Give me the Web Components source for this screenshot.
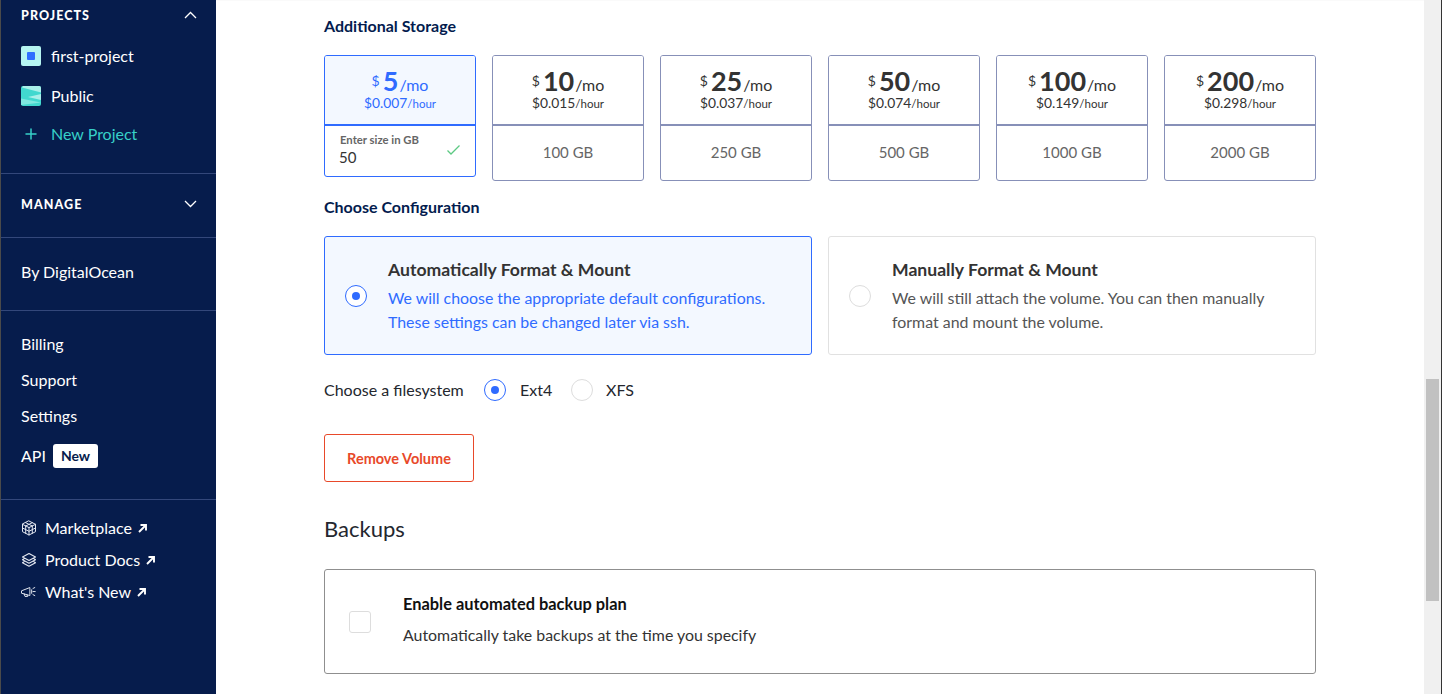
<!DOCTYPE html>
<html lang="en"><head><meta charset="utf-8"><title>Volume</title>
<style>
html,body{margin:0;height:100%;overflow:hidden;background:#fff}
body{font-family:Lato,"Noto Sans",sans-serif;font-size:16px;color:#031b4e}
ds-app{height:694px}
</style></head><body>
<ds-app>
 <ds-sidebar slot="side">
  <ds-section style="--pt:0px;--pb:21px">
   <ds-head open h="30">PROJECTS</ds-head>
   <ds-row h="40" style="margin-top:6px" icon="first">first-project</ds-row>
   <ds-row h="40" icon="public">Public</ds-row>
   <ds-row h="36" icon="plus" teal>New Project</ds-row>
  </ds-section>
  <ds-section style="--pt:15px;--pb:18px"><ds-head h="30">MANAGE</ds-head></ds-section>
  <ds-section style="--pt:16px;--pb:20px"><ds-row h="36">By DigitalOcean</ds-row></ds-section>
  <ds-section style="--pt:15px;--pb:25px">
   <ds-row h="36">Billing</ds-row><ds-row h="36">Support</ds-row><ds-row h="36">Settings</ds-row>
   <ds-row h="36" style="margin-top:4px" badge="New">API</ds-row>
  </ds-section>
  <ds-section last style="--pt:12px;--pb:0px">
   <ds-row h="32" small icon="cube" ext>Marketplace</ds-row>
   <ds-row h="32" small icon="layers" ext>Product Docs</ds-row>
   <ds-row h="32" small icon="mega" ext>What's New</ds-row>
  </ds-section>
 </ds-sidebar>
 <ds-main slot="main">
  <ds-label style="margin-top:17px">Additional Storage</ds-label>
  <ds-price-grid style="margin-top:18px">
   <ds-price selected price="5" hour="$0.007" size="50"></ds-price>
   <ds-price price="10" hour="$0.015" size="100 GB"></ds-price>
   <ds-price price="25" hour="$0.037" size="250 GB"></ds-price>
   <ds-price price="50" hour="$0.074" size="500 GB"></ds-price>
   <ds-price price="100" hour="$0.149" size="1000 GB"></ds-price>
   <ds-price price="200" hour="$0.298" size="2000 GB"></ds-price>
  </ds-price-grid>
  <ds-label style="margin-top:17px">Choose Configuration</ds-label>
  <ds-option-grid style="margin-top:18px">
   <ds-option selected title="Automatically Format &amp; Mount">We will choose the appropriate default configurations.<br>These settings can be changed later via ssh.</ds-option>
   <ds-option title="Manually Format &amp; Mount">We will still attach the volume. You can then manually<br>format and mount the volume.</ds-option>
  </ds-option-grid>
  <ds-fs style="margin-top:23px"></ds-fs>
  <ds-danger style="margin-top:32px">Remove Volume</ds-danger>
  <ds-title style="margin-top:37px">Backups</ds-title>
  <ds-backup style="margin-top:30px"></ds-backup>
 </ds-main>
 <ds-scrollbar slot="bar"></ds-scrollbar>
</ds-app>
<script>
const def=(n,html)=>{customElements.define(n,class extends HTMLElement{
  connectedCallback(){ if(this.shadowRoot) return; const r=this.attachShadow({mode:'open'}); r.innerHTML=typeof html==='function'?html(this):html; }
});};
const S='fill="none" stroke="currentColor" stroke-linecap="round" stroke-linejoin="round"';
const icons={
 first:`<svg width="20" height="20" viewBox="0 0 20 20"><rect width="20" height="20" rx="2" fill="#b5f5f1"/><rect x="6" y="6" width="8" height="8" rx="1" fill="#2f6fff"/></svg>`,
 public:`<svg width="20" height="20" viewBox="0 0 20 20"><rect width="20" height="20" rx="2" fill="#41d8cf"/><path d="M2 0H18Q20 0 20 2V6.5L1 1.5z" fill="#a9f0ea"/><path d="M20 8V14L7 11z" fill="#a9f0ea"/><path d="M0 12.5 20 16.5 0 19z" fill="#7fe8e0"/></svg>`,
 plus:`<svg width="20" height="20" viewBox="0 0 20 20" style="color:#37d0c8"><path d="M10 5V15M5 10H15" ${S} stroke-width="1.5"/></svg>`,
 cube:`<svg width="16" height="16" viewBox="0 0 16 16" style="color:#e3e7f0"><path d="M8 1 14.5 4.3V11.7L8 15 1.5 11.7V4.3zM1.5 4.3 8 7.6 14.5 4.3M8 7.6V15M4.7 2.7 11.3 6M11.3 2.7 4.7 6M1.5 8 8 11.3 14.5 8M4.7 6V13.3M11.3 6V13.3" ${S} stroke-width="1"/></svg>`,
 layers:`<svg width="16" height="16" viewBox="0 0 16 16" style="color:#e3e7f0"><path d="M8 1.5 14.5 5 8 8.5 1.5 5zM3.6 6.3 1.5 7.8 8 11.3 14.5 7.8 12.4 6.3M3.6 9.2 1.5 10.7 8 14.3 14.5 10.7 12.4 9.2" ${S} stroke-width="1.1"/></svg>`,
 mega:`<svg width="18" height="16" viewBox="0 0 18 16" style="color:#e3e7f0"><path d="M1 6.5 10 3V12L1 9.5zM3.5 10 4.5 13H7.5L6.6 10.8M12 5.5V9.5M13.5 4 15.5 3M13.5 7.5H16M13.5 11 15.5 12" ${S} stroke-width="1.1"/></svg>`
};
const arrow=`<svg width="11" height="11" viewBox="0 0 11 11" style="margin-left:5px;flex:none"><path d="M2 9 8.5 2.5M3.5 2H9V7.5" fill="none" stroke="#fff" stroke-width="1.9"/></svg>`;
def('ds-app',`<style>:host{display:flex;width:1442px;overflow:hidden;box-sizing:border-box;border-right:1px solid #333}</style><slot name="side"></slot><slot name="main"></slot><slot name="bar"></slot>`);
def('ds-sidebar',`<style>:host{display:flex;flex-direction:column;width:216px;flex:none;height:694px;box-sizing:border-box;background:#061c4c;border-left:1px solid #4a4a4a;color:#fff;font-size:16px}</style><slot></slot>`);
def('ds-section',`<style>:host{display:block;padding:var(--pt) 0 var(--pb) 20px;border-bottom:1px solid #33477a}:host([last]){border:0}</style><slot></slot>`);
def('ds-head',e=>`<style>:host{display:flex;align-items:center;justify-content:space-between;height:${e.getAttribute('h')}px;padding-right:19px;font-weight:900;font-size:12.5px;letter-spacing:1.05px}</style><slot></slot><svg width="13" height="8" viewBox="0 0 13 8"><path d="${e.hasAttribute('open')?'M1 7 6.5 1.5 12 7':'M1 1 6.5 6.5 12 1'}" fill="none" stroke="#fff" stroke-width="1.3"/></svg>`);
def('ds-row',e=>{const i=e.getAttribute('icon'),b=e.getAttribute('badge'),sm=e.hasAttribute('small');
 return `<style>:host{display:flex;align-items:center;height:${e.getAttribute('h')}px;${e.hasAttribute('teal')?'color:#37d0c8;':''}}
 .i{flex:none;display:flex;justify-content:center;width:${sm?16:20}px;margin-right:${sm?8:10}px}
 .t{padding-bottom:2px}
 .b{background:#fff;color:#061c4c;border-radius:3px;font-weight:700;font-size:14px;height:24px;line-height:23px;padding:0 8px;margin-left:7px}</style>
 ${i?`<span class="i">${icons[i]}</span>`:''}<span class="t"><slot></slot></span>${b?`<span class="b">${b}</span>`:''}${e.hasAttribute('ext')?arrow:''}`});
def('ds-main',`<style>:host{display:flex;flex-direction:column;flex:1;min-width:0;height:694px;padding:0 108px;box-sizing:border-box;background:#fff;box-shadow:inset 0 1px 0 #fafafa}</style><slot></slot>`);
def('ds-label',`<style>:host{display:flex;align-items:center;box-sizing:border-box;height:20px;padding-bottom:3px;color:#031b4e;font-weight:700}</style><slot></slot>`);
def('ds-title',`<style>:host{display:flex;align-items:center;box-sizing:border-box;height:20px;padding-bottom:2px;color:#24272e;font-size:22px}</style><slot></slot>`);
def('ds-price-grid',`<style>:host{display:grid;grid-template-columns:repeat(6,152px);gap:16px;align-items:start}</style><slot></slot>`);
def('ds-price',e=>{const sel=e.hasAttribute('selected');
 return `<style>:host{display:block;box-sizing:border-box;height:${sel?122:126}px;border:1px solid ${sel?'#2f6bff':'#8790b8'};border-radius:3px;color:${sel?'#2f6bff':'#333'}}
 .top{height:70px;box-sizing:border-box;border-bottom:2px solid ${sel?'#2f6bff':'#8790b8'};background:${sel?'#f3f8ff':'#fff'};display:flex;flex-direction:column;align-items:center;padding-top:11px;border-radius:2px 2px 0 0}
 .p{display:flex;align-items:baseline;height:28px;line-height:27px}.d{font-size:14px;position:relative;top:-5px;margin-right:3px}.n{font-size:27px;font-weight:700}.m{font-size:16px;margin-left:1px}
 .h{font-size:13.8px;line-height:16px;white-space:nowrap}.h small{font-size:11.5px}
 .s{display:flex;align-items:center;justify-content:center;height:52px;color:#666;font-size:15px}
 .in{padding:6px 15px;position:relative}.lab{font-size:11.3px;font-weight:700;color:#666;line-height:14px;margin-top:1px}.v{font-size:15px;color:#333;line-height:18px;margin:1px 0 0 -1px}
 svg{position:absolute;right:14px;top:18px}</style>
 <div class="top"><div class="p"><span class="d">$</span><span class="n">${e.getAttribute('price')}</span><span class="m">/mo</span></div><div class="h">${e.getAttribute('hour')}<small>/hour</small></div></div>
 ${sel?`<div class="in"><div class="lab">Enter size in GB</div><div class="v">${e.getAttribute('size')}</div><svg width="15" height="12" viewBox="0 0 15 12"><path d="M1.5 6.5 5 10 13.5 1.5" fill="none" stroke="#5cc983" stroke-width="1.3"/></svg></div>`:`<div class="s">${e.getAttribute('size')}</div>`}`});
def('ds-option-grid',`<style>:host{display:grid;grid-template-columns:488px 488px;gap:16px}</style><slot></slot>`);
def('ds-radio',e=>{const on=e.hasAttribute('on');return `<style>:host{flex:none;box-sizing:border-box;width:22px;height:22px;border-radius:50%;border:1px solid ${on?'#2f6bff':'#ddd'};background:#fff;display:flex;align-items:center;justify-content:center}i{width:8px;height:8px;border-radius:50%;background:#2f6bff;display:${on?'block':'none'}}</style><i></i>`});
def('ds-option',e=>{const sel=e.hasAttribute('selected');
 return `<style>:host{display:flex;align-items:center;box-sizing:border-box;height:119px;padding-left:20px;border:1px solid ${sel?'#2f6bff':'#e1e1e1'};border-radius:3px;background:${sel?'#f3f8ff':'#fff'}}
 .t{margin-left:21px}.h{font-size:17.6px;font-weight:700;color:#333;line-height:24px;margin-bottom:4px}.d{font-size:15.9px;line-height:24px;color:${sel?'#2f6bff':'#555'}}</style>
 <ds-radio ${sel?'on':''}></ds-radio><div class="t"><div class="h">${e.getAttribute('title')}</div><div class="d"><slot></slot></div></div>`});
def('ds-fs',`<style>:host{display:flex;align-items:center;height:24px;color:#24272e}span{padding-bottom:2px}.a{margin-right:19px;width:141px;white-space:nowrap}.b{margin:0 0 0 14px;width:51px}.c{margin-left:13px}</style><span class="a">Choose a filesystem</span><ds-radio on></ds-radio><span class="b">Ext4</span><ds-radio></ds-radio><span class="c">XFS</span>`);
def('ds-danger',`<style>:host{display:flex;align-items:center;justify-content:center;box-sizing:border-box;width:150px;height:48px;border:1px solid #e8492a;border-radius:3px;color:#e8492a;font-weight:700;font-size:14.5px}</style><slot></slot>`);
def('ds-backup',`<style>:host{display:flex;align-items:center;box-sizing:border-box;height:105px;padding-left:24px;border:1px solid #8f8f8f;border-radius:3px}
 i{flex:none;box-sizing:border-box;width:22px;height:22px;border:1px solid #ddd;border-radius:3px;margin-right:32px}
 .w{padding-bottom:4px}.h{font-weight:700;font-size:16.4px;color:#111;line-height:22px;margin-bottom:9px}.d{color:#333;line-height:22px;font-size:15.9px}</style><i></i><div class="w"><div class="h">Enable automated backup plan</div><div class="d">Automatically take backups at the time you specify</div></div>`);
def('ds-scrollbar',`<style>:host{display:block;flex:none;width:17px;height:694px;background:#f0f0f0;box-sizing:border-box;padding:379px 2px 0}div{height:222px;background:#c1c1c1}</style><div></div>`);
</script>
</body></html>
